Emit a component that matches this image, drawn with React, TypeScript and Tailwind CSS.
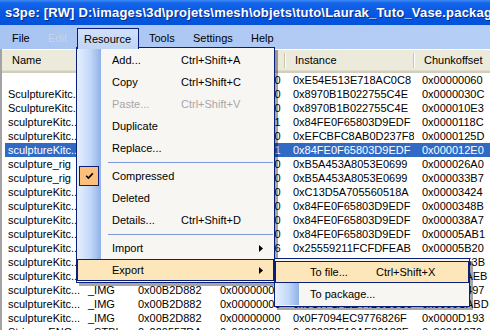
import React from 'react';

type Row = {
  name: string;
  tag: string;
  type: string;
  group: string;
  instance: string;
  offset: string;
};

const kitc = 'sculptureKitc...';

const rows: Row[] = [
  { name: '', tag: '_KEY', type: '0x0166038C', group: '0x00000000', instance: '0xE54E513E718AC0C8', offset: '0x00000060' },
  { name: 'SculptureKitc...', tag: 'MODL', type: '0x01661233', group: '0x00000000', instance: '0x8970B1B022755C4E', offset: '0x0000030C' },
  { name: 'SculptureKitc...', tag: 'MLOD', type: '0x01D10F34', group: '0x00000000', instance: '0x8970B1B022755C4E', offset: '0x000010E3' },
  { name: kitc, tag: 'GEOM', type: '0x015A1849', group: '0x00000001', instance: '0x84FE0F65803D9EDF', offset: '0x0000118C' },
  { name: kitc, tag: 'VPXY', type: '0x736884F1', group: '0x00000000', instance: '0xEFCBFC8AB0D237F8', offset: '0x0000125D' },
  { name: kitc, tag: 'GEOM', type: '0x015A1849', group: '0x00000001', instance: '0x84FE0F65803D9EDF', offset: '0x000012E0' },
  { name: 'sculpture_rig', tag: '_RIG', type: '0x8EAF13DE', group: '0x00000000', instance: '0xB5A453A8053E0699', offset: '0x000026A0' },
  { name: 'sculpture_rig', tag: 'SKEL', type: '0xD382BF57', group: '0x00000000', instance: '0xB5A453A8053E0699', offset: '0x000033B7' },
  { name: kitc, tag: 'TXTC', type: '0x033A1435', group: '0x00000000', instance: '0xC13D5A705560518A', offset: '0x00003424' },
  { name: kitc, tag: 'GEOM', type: '0x015A1849', group: '0x00000000', instance: '0x84FE0F65803D9EDF', offset: '0x0000348B' },
  { name: kitc, tag: 'GEOM', type: '0x015A1849', group: '0x00000000', instance: '0x84FE0F65803D9EDF', offset: '0x000038A7' },
  { name: kitc, tag: 'GEOM', type: '0x015A1849', group: '0x00000000', instance: '0x84FE0F65803D9EDF', offset: '0x00005AB1' },
  { name: kitc, tag: 'OBJD', type: '0x319E4F1D', group: '0x00000006', instance: '0x25559211FCFDFEAB', offset: '0x00005B20' },
  { name: kitc, tag: '_IMG', type: '0x00B2D882', group: '0x00000000', instance: '0x1D8C5E0B89B5E071', offset: '0x0000B53B' },
  { name: kitc, tag: '_IMG', type: '0x00B2D882', group: '0x00000000', instance: '0x3A0F2C91D4B8E6A2', offset: '0x0000BAEB' },
  { name: kitc, tag: '_IMG', type: '0x00B2D882', group: '0x00000000', instance: '0x6E2D4B7A90C1F383', offset: '0x0000C497' },
  { name: kitc, tag: '_IMG', type: '0x00B2D882', group: '0x00000000', instance: '0x9C7F1A2E44D0B5C6', offset: '0x0000CABD' },
  { name: kitc, tag: '_IMG', type: '0x00B2D882', group: '0x00000000', instance: '0x0F7094EC9776826F', offset: '0x0000D193' },
  { name: 'Strings_ENG...', tag: '_STBL', type: '0x220557DA', group: '0x00000000', instance: '0x0023DE19AE80182F', offset: '0x00011076' },
];

const Plumbob = () => (
  <svg width="15" height="15" viewBox="0 0 15 15">
    <circle cx="7.5" cy="7.5" r="7" fill="#dcb23e" stroke="#6f5510" strokeWidth="0.8" />
    <path d="M7.5 1.2 L11.3 7.5 L7.5 13.8 L3.7 7.5Z" fill="#3aa82a" stroke="#1b650f" strokeWidth="0.6" />
    <path d="M7.5 1.6 L7.5 13.4 M3.9 7.5 L11.1 7.5" stroke="#a8ea86" strokeWidth="0.7" />
  </svg>
);

const Arrow = () => (
  <svg width="4" height="7" viewBox="0 0 4 7">
    <path d="M0 0 L4 3.5 L0 7Z" fill="#000" />
  </svg>
);

const Check = () => (
  <svg width="9" height="8" viewBox="0 0 9 8">
    <path d="M1.2 3.8 L3.4 6 L7.8 1.4" stroke="#000" strokeWidth="1.6" fill="none" />
  </svg>
);

function HeaderCell({ label, w }: { label: string; w: string }) {
  return (
    <div className={`flex items-center justify-between shrink-0 pl-[10px] ${w}`}>
      <span className="whitespace-nowrap overflow-hidden">{label}</span>
      <div className="w-px h-[15px] bg-[#c7c5b2] shadow-[1px_0_0_#ffffff]" />
    </div>
  );
}

function ListRow({ r, selected }: { r: Row; selected: boolean }) {
  return (
    <div
      className={`flex h-[14px] leading-[14px] ml-[3px] whitespace-nowrap ${
        selected ? 'bg-[#316ac5] text-white' : 'text-black'
      }`}
    >
      <div className="w-[75px] shrink-0 pl-[3px] overflow-hidden">{r.name}</div>
      <div className="w-[50px] shrink-0 pl-[8px] overflow-hidden">{r.tag}</div>
      <div className="w-[82px] shrink-0 pl-[8px] overflow-hidden">{r.type}</div>
      <div className="w-[73px] shrink-0 pl-[8px] overflow-hidden">{r.group}</div>
      <div className="w-[129px] shrink-0 pl-[8px] overflow-hidden">{r.instance}</div>
      <div className="flex-1 pl-[8px] overflow-hidden">{r.offset}</div>
    </div>
  );
}

type ItemProps = {
  label: string;
  shortcut?: string;
  disabled?: boolean;
  checked?: boolean;
  arrow?: boolean;
  active?: boolean;
  labelW?: string;
};

function MenuItem({ label, shortcut, disabled, checked, arrow, active, labelW = 'w-[80px]' }: ItemProps) {
  return (
    <div
      className={`flex h-[22px] items-center ${
        active ? 'bg-[#fde6b9] shadow-[inset_0_0_0_1px_#0a1f7a]' : ''
      } ${disabled ? 'text-[#a7a7a7]' : 'text-black'}`}
    >
      <div
        className={`w-[24px] h-full shrink-0 flex items-center ${
          active ? '' : 'bg-[linear-gradient(to_right,#e6f0ff,#c4d8f8_55%,#8fb2e8)]'
        }`}
      >
        {checked && (
          <div className="ml-[2px] w-[20px] h-[20px] bg-[#fdc07a] border border-[#0a1f7a] flex items-center justify-center">
            <Check />
          </div>
        )}
      </div>
      <div className={`pl-[11px] shrink-0 whitespace-nowrap ${labelW}`}>{label}</div>
      {shortcut && <div className="whitespace-nowrap">{shortcut}</div>}
      {arrow && (
        <div className="ml-auto mr-[11px] flex items-center">
          <Arrow />
        </div>
      )}
    </div>
  );
}

function Separator() {
  return (
    <div className="flex h-[6px]">
      <div className="w-[24px] h-full bg-[linear-gradient(to_right,#e6f0ff,#c4d8f8_55%,#8fb2e8)]" />
      <div className="flex-1 flex items-center pl-[7px] pr-[1px]">
        <div className="h-px w-full bg-[#7b9ad8]" />
      </div>
    </div>
  );
}

export default function App() {
  return (
    <div className="relative w-[490px] h-[330px] overflow-hidden bg-white text-[11px] font-['Liberation_Sans',Arial,sans-serif] text-black">
      {/* title bar */}
      <div className="h-[25px] flex items-center pl-[2px] bg-[linear-gradient(to_bottom,#3f8cf8_0%,#1464ea_12%,#0657e2_55%,#0452d9_100%)]">
        <Plumbob />
        <div className="ml-[3px] whitespace-nowrap text-white font-bold text-[13px] tracking-[0.2px] [text-shadow:1px_1px_0_#0a2a86]">
          s3pe: [RW] D:\images\3d\projets\mesh\objets\tuto\Laurak_Tuto_Vase.package
        </div>
      </div>

      {/* menu bar */}
      <div className="h-[24px] flex pt-[3px] bg-[linear-gradient(to_right,#a8c4f2,#b6cff6)] whitespace-nowrap">
        <div className="ml-[5px] w-[36px] pl-[7px] h-[20px] leading-[20px]">File</div>
        <div className="w-[36px] pl-[7px] h-[20px] leading-[20px] text-[#c6d4ea]">Edit</div>
        <div className="relative z-20 w-[62px] pl-[6px] h-[21px] leading-[20px] border border-b-0 border-[#0a1f7a] bg-[linear-gradient(to_bottom,#d2e1f9,#c0d4f4)]">
          Resource
        </div>
        <div className="w-[47px] pl-[10px] h-[20px] leading-[20px]">Tools</div>
        <div className="w-[58px] pl-[7px] h-[20px] leading-[20px]">Settings</div>
        <div className="pl-[7px] h-[20px] leading-[20px]">Help</div>
      </div>

      {/* list view */}
      <div className="border-l-2 border-[#a3a3a3] pt-[1px] h-full">
        <div className="flex h-[23px] bg-[#ebeadb] border-b-2 border-[#d2cebd] shadow-[inset_0_-1px_0_#e2decd]">
          <HeaderCell label="Name" w="w-[78px]" />
          <HeaderCell label="Tag" w="w-[50px]" />
          <HeaderCell label="Type" w="w-[82px]" />
          <HeaderCell label="Group" w="w-[73px]" />
          <HeaderCell label="Instance" w="w-[129px]" />
          <HeaderCell label="Chunkoffset" w="w-[80px]" />
        </div>
        {rows.map((r, i) => (
          <ListRow key={i} r={r} selected={i === 5} />
        ))}
      </div>

      {/* Resource drop-down */}
      <div className="absolute z-10 left-[76px] top-[47px] w-[199px] border border-[#0a1f7a] bg-[#f7f6f3] py-[1px] shadow-[3px_3px_0_rgba(0,0,0,0.35)]">
        <MenuItem label="Add..." shortcut="Ctrl+Shift+A" />
        <MenuItem label="Copy" shortcut="Ctrl+Shift+C" />
        <MenuItem label="Paste..." shortcut="Ctrl+Shift+V" disabled />
        <MenuItem label="Duplicate" />
        <MenuItem label="Replace..." />
        <Separator />
        <MenuItem label="Compressed" checked />
        <MenuItem label="Deleted" />
        <MenuItem label="Details..." shortcut="Ctrl+Shift+D" />
        <Separator />
        <MenuItem label="Import" arrow />
        <MenuItem label="Export" arrow active />
      </div>

      {/* Export sub-menu */}
      <div className="absolute z-30 left-[274px] top-[258px] w-[196px] border border-[#0a1f7a] bg-[#f7f6f3] pt-[2px] pb-[1px] shadow-[3px_3px_0_rgba(0,0,0,0.35)]">
        <MenuItem label="To file..." shortcut="Ctrl+Shift+X" labelW="w-[77px]" active />
        <MenuItem label="To package..." labelW="w-[77px]" />
      </div>
    </div>
  );
}
